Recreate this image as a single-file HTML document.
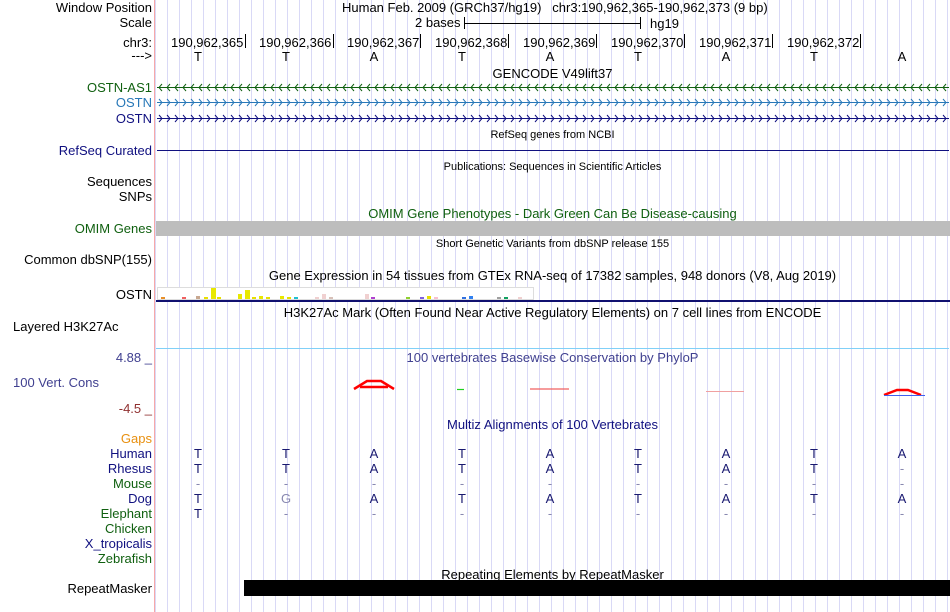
<!DOCTYPE html>
<html><head><meta charset="utf-8"><style>
body{margin:0;width:950px;height:612px;background:#fff;position:relative;overflow:hidden;font-family:"Liberation Sans",sans-serif;font-size:13px;color:#000}
.pk{position:absolute;left:154px;top:0;width:1px;height:612px;background:#f7a8a8}
.l{position:absolute;right:798px;white-space:nowrap;line-height:15px}
.c{position:absolute;left:155px;width:795px;text-align:center;white-space:nowrap;line-height:15px}
.s{font-size:11px}
.t{position:absolute;white-space:nowrap;line-height:15px}
.b{position:absolute;width:20px;margin-left:-10px;text-align:center;line-height:15px;color:#191970}
</style></head><body>
<svg style="position:absolute;left:0;top:0" width="950" height="612">
<defs><pattern id="gr" x="167" y="0" width="12" height="612" patternUnits="userSpaceOnUse"><rect x="0" y="0" width="1" height="612" fill="#d9d9f6"/></pattern></defs>
<rect x="155" y="0" width="795" height="612" fill="url(#gr)"/>
</svg>
<div class="pk"></div>

<div class="l" style="top:0">Window Position</div>
<div class="t" style="left:342px;top:0">Human Feb. 2009 (GRCh37/hg19) &nbsp; chr3:190,962,365-190,962,373 (9 bp)</div>
<div class="l" style="top:15px">Scale</div>
<div class="t" style="left:415px;top:15px">2 bases</div>
<div style="position:absolute;left:464px;top:23px;width:176px;height:1px;background:#000"></div>
<div style="position:absolute;left:464px;top:17px;width:1px;height:12px;background:#000"></div>
<div style="position:absolute;left:640px;top:17px;width:1px;height:12px;background:#000"></div>
<div class="t" style="left:650px;top:16px">hg19</div>
<div class="l" style="top:35px">chr3:</div>
<div class="t" style="left:171px;top:35px">190,962,365</div>
<div class="t" style="left:259px;top:35px">190,962,366</div>
<div class="t" style="left:347px;top:35px">190,962,367</div>
<div class="t" style="left:435px;top:35px">190,962,368</div>
<div class="t" style="left:523px;top:35px">190,962,369</div>
<div class="t" style="left:611px;top:35px">190,962,370</div>
<div class="t" style="left:699px;top:35px">190,962,371</div>
<div class="t" style="left:787px;top:35px">190,962,372</div>
<svg style="position:absolute;left:0;top:0" width="950" height="612">
<g stroke="#000"><line x1="245.5" y1="34" x2="245.5" y2="48"/><line x1="333.5" y1="34" x2="333.5" y2="48"/><line x1="420.5" y1="34" x2="420.5" y2="48"/><line x1="508.5" y1="34" x2="508.5" y2="48"/><line x1="596.5" y1="34" x2="596.5" y2="48"/><line x1="684.5" y1="34" x2="684.5" y2="48"/><line x1="772.5" y1="34" x2="772.5" y2="48"/><line x1="860.5" y1="34" x2="860.5" y2="48"/></g>
<defs>
<pattern id="la" x="157" y="0" width="8" height="612" patternUnits="userSpaceOnUse"><polyline points="5,84 2,87.5 5,91" fill="none" stroke="#106010"/></pattern>
<pattern id="ra" x="157" y="0" width="8" height="612" patternUnits="userSpaceOnUse"><polyline points="2,99 5,102.5 2,106" fill="none" stroke="#2878b8"/><polyline points="2,115 5,118.5 2,122" fill="none" stroke="#101080"/></pattern>
</defs>
<line x1="157" y1="87.5" x2="949" y2="87.5" stroke="#106010"/>
<rect x="157" y="83" width="792" height="9" fill="url(#la)"/>
<line x1="157" y1="102.5" x2="949" y2="102.5" stroke="#2878b8"/>
<line x1="157" y1="118.5" x2="949" y2="118.5" stroke="#101080"/>
<rect x="157" y="97" width="792" height="26" fill="url(#ra)"/>
<line x1="157" y1="150.5" x2="949" y2="150.5" stroke="#101080"/>
<rect x="156" y="221" width="794" height="15" fill="#bdbdbd"/>
<rect x="157.5" y="287.5" width="376" height="12" fill="#fff" stroke="#ddd"/>
<g>
<rect x="161" y="297" width="4" height="2" fill="#e8902a"/><rect x="182" y="297" width="4" height="2" fill="#f06060"/>
<rect x="196" y="296" width="4" height="3" fill="#c8a890"/><rect x="204" y="297" width="4" height="2" fill="#e8e000"/>
<rect x="211" y="288" width="5" height="11" fill="#e8e800"/><rect x="217" y="297" width="4" height="2" fill="#e8e000"/>
<rect x="238" y="294" width="4" height="5" fill="#e8e800"/><rect x="245" y="290" width="5" height="9" fill="#e8e800"/>
<rect x="252" y="297" width="4" height="2" fill="#e8e000"/><rect x="259" y="296" width="4" height="3" fill="#e8e800"/>
<rect x="266" y="297" width="4" height="2" fill="#e8e000"/><rect x="280" y="296" width="4" height="3" fill="#e8e800"/>
<rect x="287" y="297" width="4" height="2" fill="#e8e000"/><rect x="294" y="297" width="4" height="2" fill="#20c0d0"/>
<rect x="315" y="297" width="4" height="2" fill="#f0d0d0"/><rect x="322" y="294" width="4" height="5" fill="#f0d0d0"/>
<rect x="329" y="297" width="4" height="2" fill="#d8c0b8"/><rect x="365" y="294" width="4" height="5" fill="#f0d0d0"/>
<rect x="371" y="297" width="4" height="2" fill="#b040d0"/><rect x="406" y="297" width="4" height="2" fill="#90d030"/>
<rect x="420" y="297" width="4" height="2" fill="#8060e0"/><rect x="427" y="296" width="4" height="3" fill="#e8e000"/>
<rect x="434" y="297" width="4" height="2" fill="#f8c0d0"/><rect x="462" y="297" width="4" height="2" fill="#3070e0"/>
<rect x="469" y="296" width="4" height="3" fill="#3080f0"/><rect x="497" y="297" width="4" height="2" fill="#a0a0a0"/>
<rect x="504" y="297" width="4" height="2" fill="#10a060"/><rect x="518" y="297" width="4" height="2" fill="#f0d0d0"/>
</g>
<rect x="156" y="300" width="794" height="2" fill="#101070"/>
<line x1="156" y1="348.5" x2="949" y2="348.5" stroke="#80d0f8"/>
<g fill="none" stroke="#f00" stroke-width="2.5">
<polyline points="354,389 367,381 381,381 394,389"/><line x1="360" y1="387" x2="388" y2="387"/>
<polyline points="884,395 897,390 908,390 921,395"/>
</g>
<line x1="884" y1="395.5" x2="925" y2="395.5" stroke="#4060f0"/>
<line x1="530" y1="389" x2="569" y2="389" stroke="#f06060" stroke-width="1.2"/>
<line x1="706" y1="391.5" x2="744" y2="391.5" stroke="#f0a0a0"/>
<line x1="457" y1="389.5" x2="464" y2="389.5" stroke="#20d020" stroke-width="1.2"/>
<rect x="244" y="580" width="706" height="16" fill="#000"/>
</svg>
<div class="l" style="top:48px">---&gt;</div>
<div class="b" style="left:198px;top:49px;color:#000">T</div><div class="b" style="left:286px;top:49px;color:#000">T</div><div class="b" style="left:374px;top:49px;color:#000">A</div><div class="b" style="left:462px;top:49px;color:#000">T</div><div class="b" style="left:550px;top:49px;color:#000">A</div><div class="b" style="left:638px;top:49px;color:#000">T</div><div class="b" style="left:726px;top:49px;color:#000">A</div><div class="b" style="left:814px;top:49px;color:#000">T</div><div class="b" style="left:902px;top:49px;color:#000">A</div>

<div class="c" style="top:66px">GENCODE V49lift37</div>
<div class="l" style="top:80px;color:#106010">OSTN-AS1</div>
<div class="l" style="top:95px;color:#2878b8">OSTN</div>
<div class="l" style="top:111px;color:#101080">OSTN</div>
<div class="c s" style="top:128px">RefSeq genes from NCBI</div>
<div class="l" style="top:143px;color:#101080">RefSeq Curated</div>
<div class="c s" style="top:160px">Publications: Sequences in Scientific Articles</div>
<div class="l" style="top:174px">Sequences</div>
<div class="l" style="top:189px">SNPs</div>
<div class="c" style="top:206px;color:#106010">OMIM Gene Phenotypes - Dark Green Can Be Disease-causing</div>
<div class="l" style="top:221px;color:#106010">OMIM Genes</div>
<div class="c s" style="top:237px">Short Genetic Variants from dbSNP release 155</div>
<div class="l" style="top:252px">Common dbSNP(155)</div>
<div class="c" style="top:268px">Gene Expression in 54 tissues from GTEx RNA-seq of 17382 samples, 948 donors (V8, Aug 2019)</div>
<div class="l" style="top:287px">OSTN</div>
<div class="c" style="top:305px">H3K27Ac Mark (Often Found Near Active Regulatory Elements) on 7 cell lines from ENCODE</div>
<div class="t" style="top:319px;left:13px">Layered H3K27Ac</div>
<div class="l" style="top:350px;color:#404090">4.88 _</div>
<div class="c" style="top:350px;color:#404090">100 vertebrates Basewise Conservation by PhyloP</div>
<div class="t" style="left:13px;top:375px;color:#404090">100 Vert. Cons</div>
<div class="l" style="top:401px;color:#903030">-4.5 _</div>
<div class="c" style="top:417px;color:#101080">Multiz Alignments of 100 Vertebrates</div>
<div class="l" style="top:431px;color:#e89010">Gaps</div>
<div class="l" style="top:446px;color:#101080">Human</div>
<div class="l" style="top:461px;color:#101080">Rhesus</div>
<div class="l" style="top:476px;color:#106010">Mouse</div>
<div class="l" style="top:491px;color:#101080">Dog</div>
<div class="l" style="top:506px;color:#106010">Elephant</div>
<div class="l" style="top:521px;color:#106010">Chicken</div>
<div class="l" style="top:536px;color:#101080">X_tropicalis</div>
<div class="l" style="top:551px;color:#106010">Zebrafish</div>
<div class="c" style="top:567px">Repeating Elements by RepeatMasker</div>
<div class="l" style="top:581px">RepeatMasker</div>

<div class="b" style="left:198px;top:446px">T</div><div class="b" style="left:286px;top:446px">T</div><div class="b" style="left:374px;top:446px">A</div><div class="b" style="left:462px;top:446px">T</div><div class="b" style="left:550px;top:446px">A</div><div class="b" style="left:638px;top:446px">T</div><div class="b" style="left:726px;top:446px">A</div><div class="b" style="left:814px;top:446px">T</div><div class="b" style="left:902px;top:446px">A</div>
<div class="b" style="left:198px;top:461px">T</div><div class="b" style="left:286px;top:461px">T</div><div class="b" style="left:374px;top:461px">A</div><div class="b" style="left:462px;top:461px">T</div><div class="b" style="left:550px;top:461px">A</div><div class="b" style="left:638px;top:461px">T</div><div class="b" style="left:726px;top:461px">A</div><div class="b" style="left:814px;top:461px">T</div><div class="b" style="left:902px;top:461px;color:#8888b0">-</div>
<div class="b" style="left:198px;top:476px;color:#8888b0">-</div><div class="b" style="left:286px;top:476px;color:#8888b0">-</div><div class="b" style="left:374px;top:476px;color:#8888b0">-</div><div class="b" style="left:462px;top:476px;color:#8888b0">-</div><div class="b" style="left:550px;top:476px;color:#8888b0">-</div><div class="b" style="left:638px;top:476px;color:#8888b0">-</div><div class="b" style="left:726px;top:476px;color:#8888b0">-</div><div class="b" style="left:814px;top:476px;color:#8888b0">-</div><div class="b" style="left:902px;top:476px;color:#8888b0">-</div>
<div class="b" style="left:198px;top:491px">T</div><div class="b" style="left:286px;top:491px;color:#8888b0">G</div><div class="b" style="left:374px;top:491px">A</div><div class="b" style="left:462px;top:491px">T</div><div class="b" style="left:550px;top:491px">A</div><div class="b" style="left:638px;top:491px">T</div><div class="b" style="left:726px;top:491px">A</div><div class="b" style="left:814px;top:491px">T</div><div class="b" style="left:902px;top:491px">A</div>
<div class="b" style="left:198px;top:506px">T</div><div class="b" style="left:286px;top:506px;color:#8888b0">-</div><div class="b" style="left:374px;top:506px;color:#8888b0">-</div><div class="b" style="left:462px;top:506px;color:#8888b0">-</div><div class="b" style="left:550px;top:506px;color:#8888b0">-</div><div class="b" style="left:638px;top:506px;color:#8888b0">-</div><div class="b" style="left:726px;top:506px;color:#8888b0">-</div><div class="b" style="left:814px;top:506px;color:#8888b0">-</div><div class="b" style="left:902px;top:506px;color:#8888b0">-</div>
</body></html>
